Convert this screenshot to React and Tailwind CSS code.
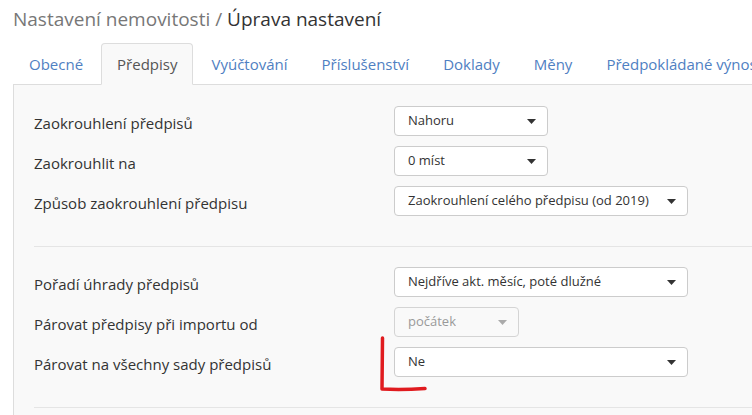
import React from "react";

const tabs = [
  "Obecné",
  "Předpisy",
  "Vyúčtování",
  "Příslušenství",
  "Doklady",
  "Měny",
  "Předpokládané výnosy",
];

function Caret({ muted }) {
  return (
    <svg width="9" height="5" viewBox="0 0 9 5" className="shrink-0">
      <path d="M0 0 H9 L4.5 5 Z" fill={muted ? "#aaa" : "#333"} />
    </svg>
  );
}

function Select({ value, width, disabled }) {
  return (
    <div
      className={
        "h-[30px] border rounded-[4px] flex items-center justify-between pl-[13px] pr-[11px] text-[13px] " +
        width +
        (disabled
          ? " bg-[#f9f9f9] border-[#d4d4d4] text-[#999]"
          : " bg-white border-[#ccc] text-[#333]")
      }
    >
      <span className="truncate">{value}</span>
      <Caret muted={disabled} />
    </div>
  );
}

function Row({ label, children }) {
  return (
    <div className="flex">
      <label className="w-[360px] shrink-0 pt-[7px] text-[15px] leading-[20px] text-[#333]">
        {label}
      </label>
      {children}
    </div>
  );
}

export default function App() {
  return (
    <div className="relative w-[752px] h-[415px] overflow-hidden bg-white font-['Open_Sans',sans-serif]">
      {/* Page title */}
      <h1 className="pl-[13px] pt-[8px] text-[19px] leading-[22px] text-[#777] whitespace-nowrap">
        Nastavení nemovitosti / <span className="text-[#333]">Úprava nastavení</span>
      </h1>

      <div className="ml-[13px] mt-[13px] w-[900px]">
        {/* Tabs */}
        <ul className="flex border-b border-[#ddd] whitespace-nowrap">
          {tabs.map((t) => (
            <li key={t} className="mr-[2px] -mb-px">
              <a
                className={
                  "block px-[15px] py-[10px] leading-[20px] text-[15px] border rounded-t-[4px] " +
                  (t === "Předpisy"
                    ? "border-[#ddd] border-b-transparent bg-[#f9f9f9] text-[#555]"
                    : "border-transparent text-[#4f80c2]")
                }
              >
                {t}
              </a>
            </li>
          ))}
        </ul>

        {/* Panel */}
        <div className="bg-[#f9f9f9] border-l border-[#ddd] pt-[21px] pl-[20px] h-[400px]">
          <div className="flex flex-col gap-[10px]">
            <Row label="Zaokrouhlení předpisů">
              <Select value="Nahoru" width="w-[154px]" />
            </Row>
            <Row label="Zaokrouhlit na">
              <Select value="0 míst" width="w-[154px]" />
            </Row>
            <Row label="Způsob zaokrouhlení předpisu">
              <Select value="Zaokrouhlení celého předpisu (od 2019)" width="w-[294px]" />
            </Row>
          </div>

          <div className="mt-[30px] border-t border-[#e5e5e5]" />

          <div className="pt-[20px] flex flex-col gap-[10px]">
            <Row label="Pořadí úhrady předpisů">
              <Select value="Nejdříve akt. měsíc, poté dlužné" width="w-[294px]" />
            </Row>
            <Row label="Párovat předpisy při importu od">
              <Select value="počátek" width="w-[125px]" disabled />
            </Row>
            <Row label="Párovat na všechny sady předpisů">
              <Select value="Ne" width="w-[294px]" />
            </Row>
          </div>

          <div className="mt-[30px] border-t border-[#e5e5e5]" />
        </div>
      </div>

      {/* Red hand-drawn annotation */}
      <svg
        className="absolute left-0 top-0 pointer-events-none"
        width="752"
        height="415"
        viewBox="0 0 752 415"
      >
        <path
          d="M382.5 338 L382 389 Q 402 390 425 388.5"
          fill="none"
          stroke="#e01b1f"
          strokeWidth="3.5"
          strokeLinecap="round"
          strokeLinejoin="round"
        />
      </svg>
    </div>
  );
}
